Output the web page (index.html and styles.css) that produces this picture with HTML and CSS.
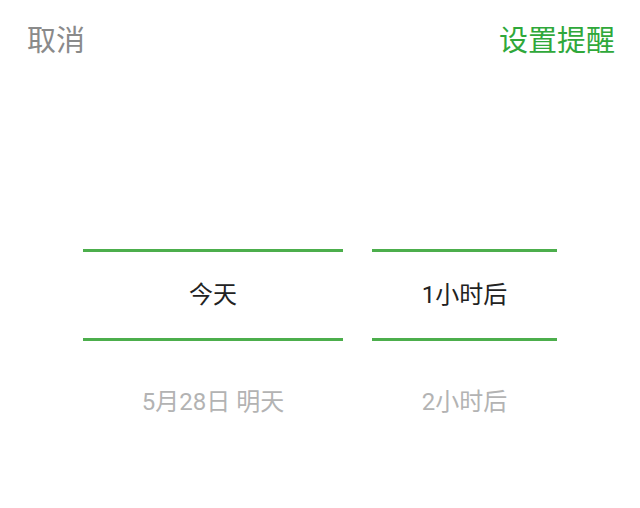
FILE: index.html
```html
<!DOCTYPE html>
<html lang="zh-CN">
  <head>
    <meta charset="utf-8">
    <title>设置提醒</title>
    <link rel="stylesheet" href="styles.css">
  </head>
  <body>
    <div class="header">
      <span class="btn-cancel">取消</span>
      <span class="btn-confirm">设置提醒</span>
    </div>

    <div class="picker">
      <div class="wheel">
        <div class="wheel-item selected">今天</div>
        <div class="wheel-item">5月28日 明天</div>
      </div>
      <div class="wheel">
        <div class="wheel-item selected">1小时后</div>
        <div class="wheel-item">2小时后</div>
      </div>
    </div>
  </body>
</html>
```

FILE: styles.css
```css
:root {
  --green: #2fa83a;
  --line: #4cae4c;
  --text: #222222;
  --muted: #8a8a8a;
  --faint: #b3b3b3;
}

body {
  margin: 0;
  background-color: #ffffff;
  font-family: Roboto, "Noto Sans CJK SC", sans-serif;
  color: var(--text);
}

.header {
  display: flex;
  justify-content: space-between;
  align-items: center;
  height: 76px;
  padding: 0 25px 0 27px;
  font-size: 29px;
}

.btn-cancel {
  color: var(--muted);
}

.btn-confirm {
  color: var(--green);
}

.picker {
  display: grid;
  grid-template-columns: 260px 185px;
  justify-content: center;
  column-gap: 29px;
  margin-top: 173px;
}

.wheel {
  display: flex;
  flex-direction: column;
}

.wheel-item {
  height: 122px;
  line-height: 122px;
  text-align: center;
  font-size: 24px;
  color: var(--faint);
  white-space: nowrap;
}

.wheel-item.selected {
  height: 86px;
  line-height: 86px;
  color: var(--text);
  border-top: 3px solid var(--line);
  border-bottom: 3px solid var(--line);
}
```
